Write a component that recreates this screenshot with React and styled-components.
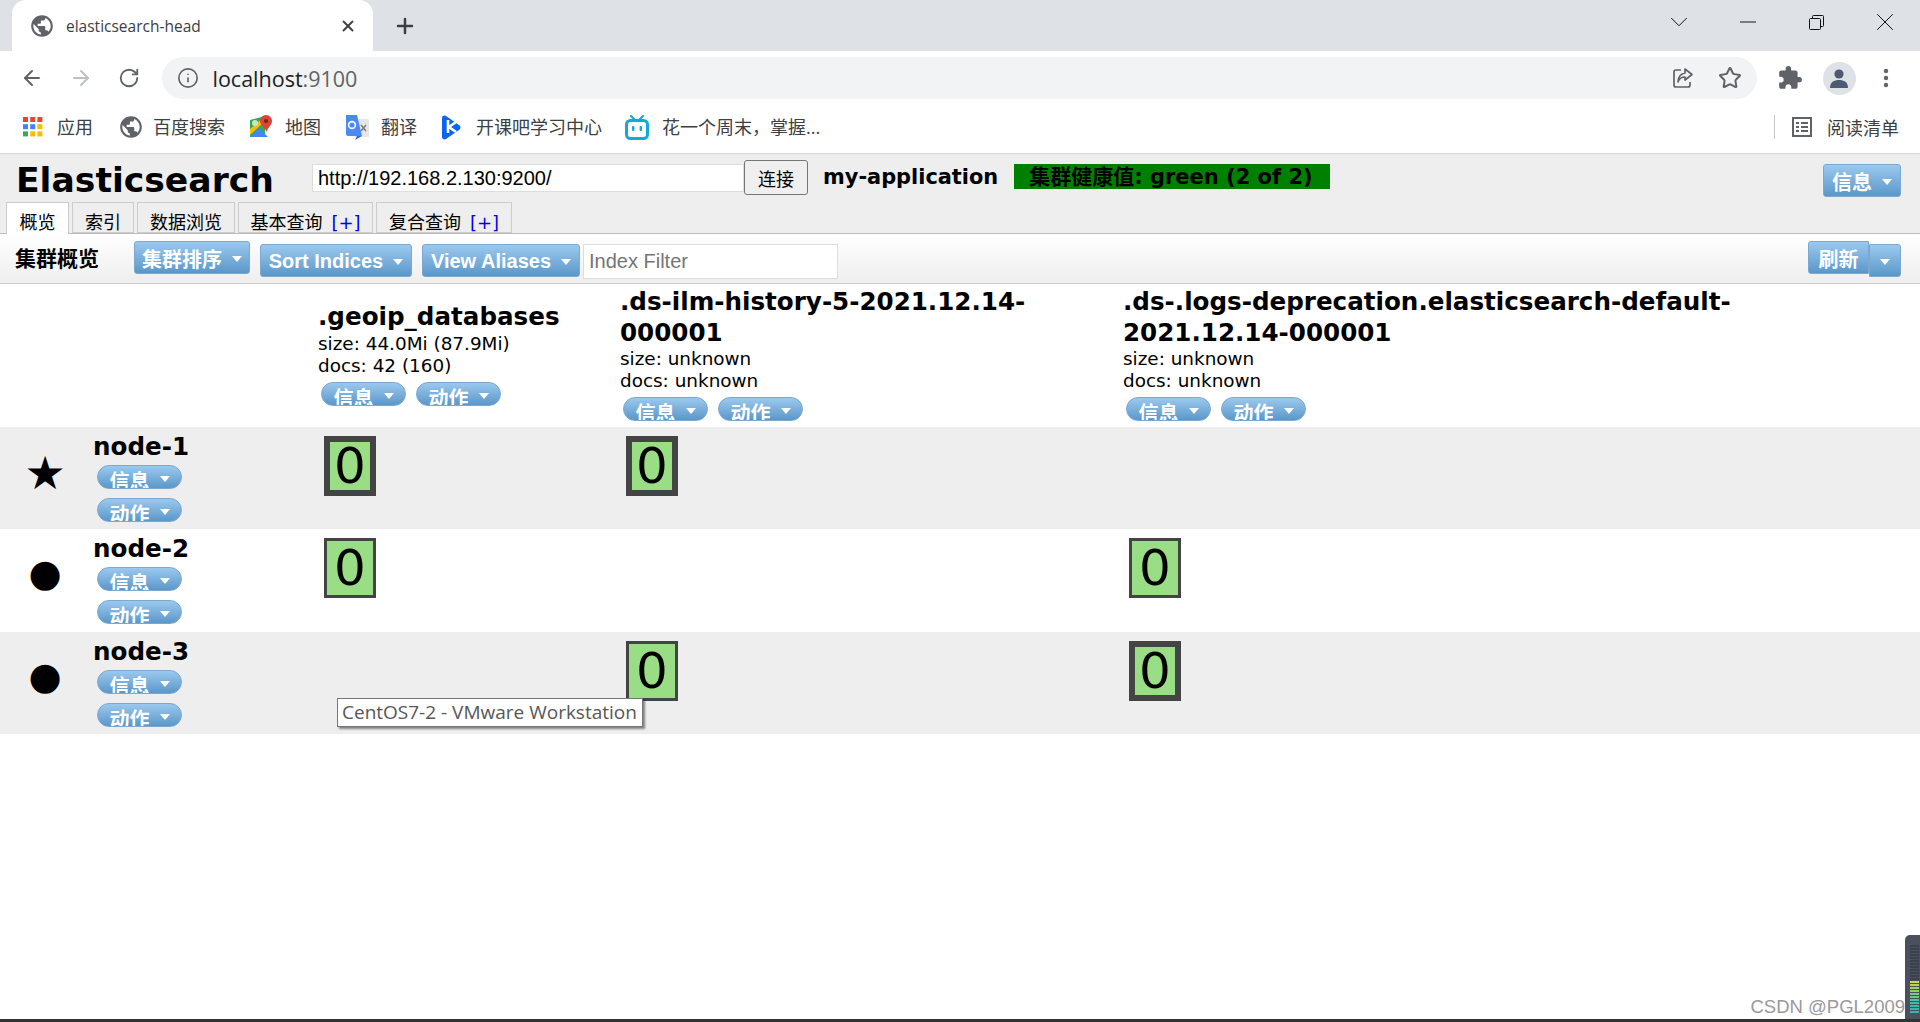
import styled, { createGlobalStyle } from "styled-components"
import { ArrowLeft, ArrowRight, RotateCw, Info, Star, Plus, X, ChevronDown, Minus, MoreVertical } from "lucide-react"
import { MdPublic, MdExtension } from "react-icons/md"

const PAGE_FONT = `"DejaVu Sans", "Noto Sans CJK SC", sans-serif`
const UI_FONT = `"Open Sans", "Noto Sans CJK SC", sans-serif`
const ARIAL = `"Liberation Sans", "Noto Sans CJK SC", sans-serif`

const GlobalStyle = createGlobalStyle`
  html, body {
    margin: 0;
    padding: 0;
    height: 100%;
    background: #fff;
    overflow: hidden;
  }
  * { box-sizing: border-box; }
`

const Page = styled.div`
  position: relative;
  width: 1920px;
  height: 1022px;
  overflow: hidden;
  font-family: ${PAGE_FONT};
  color: #000;
`

const TabStrip = styled.div`
  height: 51px;
  background: #dee1e6;
  display: flex;
  align-items: flex-end;
  padding-left: 12px;
`
const BrowserTab = styled.div`
  width: 361px;
  height: 51px;
  background: #fff;
  border-radius: 14px 14px 0 0;
  display: flex;
  align-items: center;
  padding: 0 16px 0 17px;
  font: 400 15.5px ${UI_FONT};
  color: #3c4043;
  span { margin-left: 11px; flex: 1; }
`
const NewTab = styled.div`
  width: 40px;
  height: 51px;
  margin-left: 12px;
  display: flex;
  align-items: center;
  justify-content: center;
  color: #3c4043;
`
const WindowControls = styled.div`
  margin-left: auto;
  height: 44px;
  align-self: flex-start;
  display: flex;
  align-items: center;
  padding-right: 1px;
  color: #111;
`
const WindowButton = styled.div`
  width: 68.5px;
  display: flex;
  justify-content: center;
`
const NavBar = styled.div`
  height: 54px;
  background: #fff;
  display: flex;
  align-items: center;
  padding-left: 20px;
  color: #5f6368;
`
const NavIcon = styled.div`
  width: 24px;
  display: flex;
  justify-content: center;
  margin-right: 24.5px;
  color: ${(p) => p.$color || "#5f6368"};
`
const Omnibox = styled.div`
  width: 1595px;
  height: 42px;
  border-radius: 21px;
  background: #f1f3f4;
  margin-left: -4px;
  display: flex;
  align-items: center;
  padding: 0 15px;
`
const Address = styled.div`
  margin-left: 14px;
  font: 400 21.5px ${UI_FONT};
  color: #202124;
  flex: 1;
  span { color: #5f6368; }
`
const OmniActions = styled.div`
  display: flex;
  align-items: center;
  gap: 24px;
`
const NavRight = styled.div`
  display: flex;
  align-items: center;
  margin-left: 20px;
  gap: 22px;
`
const Avatar = styled.div`
  width: 33px;
  height: 33px;
  border-radius: 50%;
  background: #dee1e6;
  display: flex;
  align-items: center;
  justify-content: center;
  margin: 0 -4px 0 -2px;
`
const Bookmarks = styled.div`
  height: 49px;
  background: #fff;
  border-bottom: 1px solid #d8d8d8;
  display: flex;
  align-items: center;
  padding-left: 23px;
  padding-bottom: 4px;
  font: 400 18px ${UI_FONT};
  color: #3c4043;
`
const Bookmark = styled.div`
  display: flex;
  align-items: center;
  gap: ${(p) => p.$gap || 13}px;
  margin-right: ${(p) => p.$right || 25}px;
  white-space: nowrap;
  line-height: 24px;
`
const ReadingList = styled.div`
  margin-left: auto;
  height: 24px;
  display: flex;
  align-items: center;
  gap: 15px;
  border-left: 1px solid #c8c8c8;
  padding: 0 21px 0 17px;
`

const Head = styled.div`
  height: 80px;
  background: #eee;
  border-bottom: 1px solid #bbb;
  display: flex;
  flex-direction: column;
  justify-content: space-between;
`
const HeadTop = styled.div`
  display: flex;
  align-items: flex-start;
  padding: 6px 19px 0 16px;
`
const Title = styled.div`
  width: 296px;
  font-size: 34.6px;
  font-weight: 700;
  line-height: 40px;
`
const UrlInput = styled.input`
  width: 432px;
  height: 28px;
  margin-top: 4px;
  border: 1px solid #ddd;
  background: #fff;
  padding: 0 5px;
  font: 400 20px ${ARIAL};
  color: #000;
  outline: none;
`
const ConnectButton = styled.button`
  width: 64px;
  height: 35px;
  border: 1px solid #767676;
  border-radius: 3px;
  background: #efefef;
  padding: 0;
  font: 400 18px ${ARIAL};
  color: #000;
`
const ClusterName = styled.div`
  margin-left: 15px;
  font-size: 20.9px;
  font-weight: 700;
  line-height: 34px;
`
const Health = styled.div`
  margin: 4px 0 0 16px;
  width: 316px;
  height: 25px;
  background: #008000;
  padding-left: 15px;
  font-size: 21px;
  font-weight: 700;
  line-height: 26px;
  white-space: nowrap;
`
const TabRow = styled.div`
  display: flex;
  gap: 3px;
  padding-left: 6px;
  height: 31px;
`
const PageTab = styled.div`
  height: ${(p) => (p.$active ? 32 : 31)}px;
  width: ${(p) => p.$w}px;
  border: 1px solid #ccc;
  border-bottom: ${(p) => (p.$active ? "none" : "1px solid #ccc")};
  background: ${(p) => (p.$active ? "#fff" : "#eee")};
  position: relative;
  z-index: 1;
  text-align: center;
  font: 400 18px/39px ${PAGE_FONT};
  white-space: nowrap;
  b { font-weight: 400; color: #0000ee; margin-left: 9px; }
`
const Overview = styled.div`
  height: 50px;
  background: linear-gradient(#fff, #eee);
  border-bottom: 1px solid #ccc;
  padding: 7px 19px 0 15px;
  display: flex;
  align-items: flex-start;
`
const OverviewTitle = styled.div`
  width: 119px;
  font-size: 21px;
  font-weight: 700;
  line-height: 36px;
`
const Button = styled.div`
  height: 33px;
  width: ${(p) => p.$w}px;
  margin: ${(p) => p.$mt || 0}px ${(p) => p.$mr || 0}px 0 0;
  border: 1px solid #7ba8d0;
  border-radius: ${(p) => p.$radius || "3px"};
  background: linear-gradient(#9bc9ee, #5b97c9);
  color: #fff;
  font: 700 20px/${(p) => p.$lh || 37}px ${ARIAL};
  display: flex;
  align-items: flex-start;
  justify-content: center;
  gap: 10px;
  white-space: nowrap;
  overflow: hidden;
`
const Caret = styled.i`
  width: 0;
  height: 0;
  margin-top: 14px;
  border-left: 5.500px solid transparent;
  border-right: 5.500px solid transparent;
  border-top: 6px solid #fff;
  flex: none;
`
const FilterInput = styled.input`
  width: 255px;
  height: 35px;
  margin: 3px 0 0 3px;
  border: 1px solid #ddd;
  background: #fff;
  padding: 0 5px;
  font: 400 20px ${ARIAL};
  outline: none;
  &::placeholder { color: #757575; opacity: 1; }
`
const Spacer = styled.div`
  flex: 1;
`
const Row = styled.div`
  display: grid;
  grid-template-columns: 90px 225px 302px 503px 720px;
  height: ${(p) => p.$h}px;
  background: ${(p) => (p.$alt ? "#eee" : "#fff")};
`
const IndexCell = styled.div`
  padding: ${(p) => p.$top}px 3px 0;
`
const IndexName = styled.div`
  font-size: 24.6px;
  font-weight: 700;
  line-height: 30.5px;
`
const IndexStat = styled.div`
  font-size: 18.4px;
  line-height: 22px;
  white-space: nowrap;
`
const Pills = styled.div`
  display: flex;
  gap: 10px;
  padding-left: 3px;
  margin-top: 5px;
`
const Pill = styled.div`
  width: 85px;
  height: 24px;
  border: 1px solid #7ba8d0;
  border-radius: 12px;
  background: linear-gradient(#9bc9ee, #5b97c9);
  color: #fff;
  font: 700 20px/33px ${ARIAL};
  display: flex;
  justify-content: center;
  gap: 10px;
  overflow: hidden;
  ${Caret} { margin-top: 10px; }
`
const NodeIcon = styled.div`
  font-size: ${(p) => (p.$master ? 46 : 38)}px;
  line-height: 1;
  display: flex;
  justify-content: center;
  padding-top: ${(p) => (p.$master ? 23 : 25)}px;
`
const NodeCell = styled.div`
  padding: 5px 3px 0;
`
const NodeName = styled.div`
  font-size: 24.6px;
  font-weight: 700;
  line-height: 30px;
`
const NodeActions = styled.div`
  display: flex;
  flex-direction: column;
  gap: 9px;
  padding-left: 4px;
  margin-top: 3px;
`
const ShardCell = styled.div`
  padding: 9px 0 0 9px;
`
const Shard = styled.div`
  width: 52px;
  height: 60px;
  border: ${(p) => (p.$primary ? 6 : 3)}px solid #444;
  background: #99dd85;
  font-size: 50px;
  display: flex;
  align-items: center;
  justify-content: center;
  line-height: 1;
`
const Tooltip = styled.div`
  position: absolute;
  left: 337px;
  top: 698px;
  width: 306px;
  height: 29px;
  background: #fff;
  border: 1px solid #767676;
  box-shadow: 2px 2px 2px rgba(0, 0, 0, 0.45);
  font: 400 19px/27px ${UI_FONT};
  color: #575757;
  padding-left: 4px;
  white-space: nowrap;
`
const Watermark = styled.div`
  position: absolute;
  right: 15px;
  bottom: 3px;
  font: 400 18.5px/24px ${ARIAL};
  color: #999;
`
const Meter = styled.div`
  position: absolute;
  right: 0;
  top: 935px;
  width: 15px;
  height: 84px;
  border-radius: 5px 0 0 0;
  background: #4a505c;
  padding: 10px 1px 2px 5px;
  display: flex;
  flex-direction: column;
  gap: 1px;
`
const MeterBar = styled.div`
  height: 2px;
  background: ${(p) => p.$c};
`
const BottomLine = styled.div`
  position: absolute;
  left: 0;
  right: 0;
  bottom: 0;
  height: 3px;
  background: #333;
`

const AppsIcon = () => {
  const colors = ["#ea4335", "#ea4335", "#ea4335", "#4285f4", "#4285f4", "#fbbc04", "#34a853", "#fbbc04", "#fbbc04"]
  return (
    <svg width="20" height="20" viewBox="0 0 20 20">
      {colors.map((c, i) => (
        <rect key={i} x={(i % 3) * 7.2} y={Math.floor(i / 3) * 7.2} width="5" height="5" fill={c} />
      ))}
    </svg>
  )
}
const MapsIcon = () => (
  <svg width="22" height="24" viewBox="0 0 22 24">
    <path d="M0 5l15-4v21L0 22z" fill="#34a853" />
    <path d="M0 22l9-9 9 9z" fill="#4285f4" />
    <path d="M0 14L13 3l2 3L0 20z" fill="#fbbc04" />
    <circle cx="5" cy="8" r="3" fill="#c8e6c9" />
    <path d="M16 0a6 6 0 0 1 6 6c0 4-4 6-5.500 11C15 12 10 10 10 6a6 6 0 0 1 6-6z" fill="#db4437" />
    <circle cx="16" cy="6" r="2" fill="#7b1f17" />
  </svg>
)
const TranslateIcon = () => (
  <svg width="24" height="25" viewBox="0 0 24 25">
    <rect x="9" y="4" width="15" height="18" rx="1" fill="#e6e6e6" />
    <path d="M1 0h11l5 21H3a2 2 0 0 1-2-2z" fill="#4a8af4" />
    <path d="M12 21l-2 4 7-4z" fill="#3367c8" />
    <circle cx="7" cy="10" r="3.400" fill="none" stroke="#fff" strokeWidth="1.600" />
    <path d="M16 10l5 6M21 10l-5 6" stroke="#777" strokeWidth="1.400" />
  </svg>
)
const KaikebaIcon = () => (
  <svg width="20" height="25" viewBox="0 0 20 25">
    <path d="M0 3c0-2 2-3 4-2l13 9c2 1 2 4 0 5L4 24c-2 1-4 0-4-2z" fill="#0a66f0" />
    <path d="M6 5v13M14 7l-7 5 7 5" fill="none" stroke="#fff" strokeWidth="2.600" />
  </svg>
)
const BiliIcon = () => (
  <svg width="24" height="25" viewBox="0 0 24 25">
    <path d="M6 1l4 4M18 1l-4 4" stroke="#12a9d8" strokeWidth="2" strokeLinecap="round" />
    <rect x="1.500" y="5.500" width="21" height="18" rx="4" fill="#fff" stroke="#12a9d8" strokeWidth="3" />
    <rect x="7" y="11" width="2.400" height="5" rx="1" fill="#12a9d8" />
    <rect x="14.600" y="11" width="2.400" height="5" rx="1" fill="#12a9d8" />
  </svg>
)
const ShareIcon = () => (
  <svg width="22" height="22" viewBox="0 0 22 22" fill="none" stroke="#5f6368" strokeWidth="1.700">
    <path d="M9 3H4a2 2 0 0 0-2 2v13a2 2 0 0 0 2 2h12a2 2 0 0 0 2-2v-3" />
    <path d="M13 2l7 5.500-7 5.500V10c-4 0-6 2-7 5 0-5 2-8 7-9z" strokeLinejoin="round" />
  </svg>
)
const RestoreIcon = () => (
  <svg width="15" height="15" viewBox="0 0 15 15" fill="none" stroke="#111" strokeWidth="1">
    <rect x="0.500" y="3.500" width="11" height="11" rx="1" />
    <path d="M3.500 3V1.500a1 1 0 0 1 1-1h9a1 1 0 0 1 1 1v9a1 1 0 0 1-1 1H12" />
  </svg>
)
const PersonIcon = () => (
  <svg width="20" height="19" viewBox="0 0 20 19" fill="#4d5a73">
    <circle cx="10" cy="5" r="4.600" />
    <path d="M1 19c0-6 4-8 9-8s9 2 9 8z" />
  </svg>
)
const ListIcon = () => (
  <svg width="20" height="20" viewBox="0 0 20 20" fill="none" stroke="#5f6368" strokeWidth="2">
    <rect x="1" y="1" width="18" height="18" />
    <path d="M4 6h3M9 6h7M4 10h3M9 10h7M4 14h3M9 14h7" />
  </svg>
)

const bars = [
  ...Array(12).fill("#3b404c"),
  "#c8d65a", "#b5d45c", "#a3d163", "#8fd068", "#78cc74", "#62c987", "#4dc49a", "#40bda6", "#38b6ad", "#38b6ad", "#38b6ad",
]

const indices = [
  { name: ".geoip_databases", size: "44.0Mi (87.9Mi)", docs: "42 (160)", top: 18 },
  { name: ".ds-ilm-history-5-2021.12.14-000001", size: "unknown", docs: "unknown", top: 3 },
  { name: ".ds-.logs-deprecation.elasticsearch-default-2021.12.14-000001", size: "unknown", docs: "unknown", top: 3 },
]

// null = no shard on this node, true = primary
const nodes = [
  { name: "node-1", master: true, shards: [true, true, null] },
  { name: "node-2", shards: [false, null, false] },
  { name: "node-3", shards: [null, false, true] },
]

const PillButton = ({ children }) => (
  <Pill>
    {children}
    <Caret />
  </Pill>
)

const App = () => {
  return (
    <Page>
      <GlobalStyle />
      <TabStrip>
        <BrowserTab>
          <MdPublic size={26} color="#5f6368" />
          <span>elasticsearch-head</span>
          <X size={18} color="#3c4043" strokeWidth={2.5} />
        </BrowserTab>
        <NewTab>
          <Plus size={24} strokeWidth={2.5} />
        </NewTab>
        <WindowControls>
          <WindowButton><ChevronDown size={30} strokeWidth={0.8} /></WindowButton>
          <WindowButton><Minus size={26} strokeWidth={0.9} /></WindowButton>
          <WindowButton><RestoreIcon /></WindowButton>
          <WindowButton><X size={30} strokeWidth={0.8} /></WindowButton>
        </WindowControls>
      </TabStrip>
      <NavBar>
        <NavIcon><ArrowLeft size={24} strokeWidth={2} /></NavIcon>
        <NavIcon $color="#bdc1c6"><ArrowRight size={24} strokeWidth={2} /></NavIcon>
        <NavIcon><RotateCw size={22} strokeWidth={2} /></NavIcon>
        <Omnibox>
          <Info size={22} strokeWidth={1.8} color="#5f6368" />
          <Address>localhost<span>:9100</span></Address>
          <OmniActions>
            <ShareIcon />
            <Star size={24} strokeWidth={2} color="#5f6368" />
          </OmniActions>
        </Omnibox>
        <NavRight>
          <MdExtension size={26} color="#5f6368" />
          <Avatar><PersonIcon /></Avatar>
          <MoreVertical size={24} strokeWidth={2.4} color="#5f6368" />
        </NavRight>
      </NavBar>
      <Bookmarks>
        <Bookmark $gap={14}><AppsIcon />应用</Bookmark>
        <Bookmark $gap={9}><MdPublic size={26} color="#5f6368" />百度搜索</Bookmark>
        <Bookmark $right={24}><MapsIcon />地图</Bookmark>
        <Bookmark $gap={12}><TranslateIcon />翻译</Bookmark>
        <Bookmark $gap={14} $right={23}><KaikebaIcon />开课吧学习中心</Bookmark>
        <Bookmark><BiliIcon />花一个周末，掌握...</Bookmark>
        <ReadingList><ListIcon />阅读清单</ReadingList>
      </Bookmarks>

      <Head>
        <HeadTop>
          <Title>Elasticsearch</Title>
          <UrlInput defaultValue="http://192.168.2.130:9200/" />
          <ConnectButton>连接</ConnectButton>
          <ClusterName>my-application</ClusterName>
          <Health>集群健康值: green (2 of 2)</Health>
          <Spacer />
          <Button $w={78} $mt={4}>信息<Caret /></Button>
        </HeadTop>
        <TabRow>
          <PageTab $active $w={63}>概览</PageTab>
          <PageTab $w={62}>索引</PageTab>
          <PageTab $w={98}>数据浏览</PageTab>
          <PageTab $w={135}>基本查询<b>[+]</b></PageTab>
          <PageTab $w={136}>复合查询<b>[+]</b></PageTab>
        </TabRow>
      </Head>
      <Overview>
        <OverviewTitle>集群概览</OverviewTitle>
        <Button $w={116} $mr={10}>集群排序<Caret /></Button>
        <Button $w={152} $mt={3} $mr={10} $lh={32}>Sort Indices<Caret /></Button>
        <Button $w={158} $mt={3} $lh={32}>View Aliases<Caret /></Button>
        <FilterInput placeholder="Index Filter" />
        <Spacer />
        <Button $w={61} $radius="3px 0 0 3px">刷新</Button>
        <Button $w={32} $mt={3} $radius="0 3px 3px 0"><Caret /></Button>
      </Overview>

      <Row $h={143}>
        <div />
        <div />
        {indices.map((ix) => (
          <IndexCell key={ix.name} $top={ix.top}>
            <IndexName>{ix.name}</IndexName>
            <IndexStat>size: {ix.size}</IndexStat>
            <IndexStat>docs: {ix.docs}</IndexStat>
            <Pills>
              <PillButton>信息</PillButton>
              <PillButton>动作</PillButton>
            </Pills>
          </IndexCell>
        ))}
      </Row>
      {nodes.map((node, i) => (
        <Row key={node.name} $h={i === 1 ? 103 : 102} $alt={i !== 1}>
          <NodeIcon $master={node.master}>{node.master ? "★" : "●"}</NodeIcon>
          <NodeCell>
            <NodeName>{node.name}</NodeName>
            <NodeActions>
              <PillButton>信息</PillButton>
              <PillButton>动作</PillButton>
            </NodeActions>
          </NodeCell>
          {node.shards.map((s, j) => (
            <ShardCell key={j}>
              {s !== null && <Shard $primary={s}>0</Shard>}
            </ShardCell>
          ))}
        </Row>
      ))}

      <Tooltip>CentOS7-2 - VMware Workstation</Tooltip>
      <Watermark>CSDN @PGL2009</Watermark>
      <Meter>
        {bars.map((c, i) => <MeterBar key={i} $c={c} />)}
      </Meter>
      <BottomLine />
    </Page>
  )
}

export default App
